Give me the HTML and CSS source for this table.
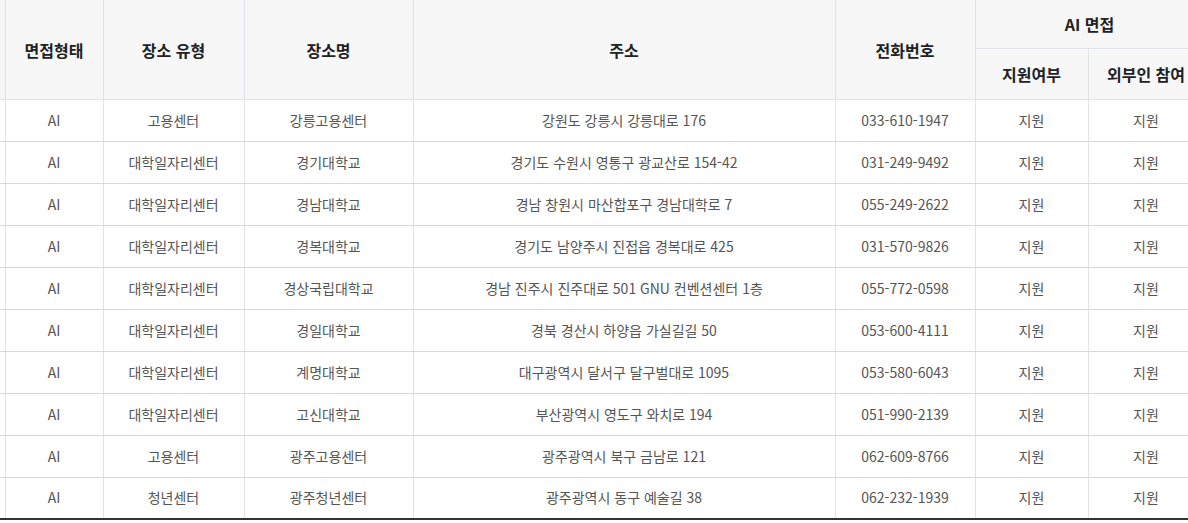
FILE: index.html
```html
<!DOCTYPE html>
<html lang="ko">
<head>
<meta charset="utf-8">
<title>AI 면접 장소</title>
<link rel="stylesheet" href="styles.css">
</head>
<body>
<div class="table-wrap">
  <table class="place-table">
    <colgroup>
      <col class="c-lead">
      <col class="c-type">
      <col class="c-kind">
      <col class="c-name">
      <col class="c-addr">
      <col class="c-tel">
      <col class="c-sup">
      <col class="c-ext">
    </colgroup>
    <thead>
      <tr class="head-top">
        <th rowspan="2" class="lead"></th>
        <th rowspan="2">면접형태</th>
        <th rowspan="2">장소 유형</th>
        <th rowspan="2">장소명</th>
        <th rowspan="2">주소</th>
        <th rowspan="2">전화번호</th>
        <th colspan="2">AI 면접</th>
      </tr>
      <tr class="head-sub">
        <th>지원여부</th>
        <th>외부인 참여</th>
      </tr>
    </thead>
    <tbody>
      <tr><td class="lead"></td><td>AI</td><td>고용센터</td><td>강릉고용센터</td><td>강원도 강릉시 강릉대로 176</td><td>033-610-1947</td><td>지원</td><td>지원</td></tr>
      <tr><td class="lead"></td><td>AI</td><td>대학일자리센터</td><td>경기대학교</td><td>경기도 수원시 영통구 광교산로 154-42</td><td>031-249-9492</td><td>지원</td><td>지원</td></tr>
      <tr><td class="lead"></td><td>AI</td><td>대학일자리센터</td><td>경남대학교</td><td>경남 창원시 마산합포구 경남대학로 7</td><td>055-249-2622</td><td>지원</td><td>지원</td></tr>
      <tr><td class="lead"></td><td>AI</td><td>대학일자리센터</td><td>경복대학교</td><td>경기도 남양주시 진접읍 경복대로 425</td><td>031-570-9826</td><td>지원</td><td>지원</td></tr>
      <tr><td class="lead"></td><td>AI</td><td>대학일자리센터</td><td>경상국립대학교</td><td>경남 진주시 진주대로 501 GNU 컨벤션센터 1층</td><td>055-772-0598</td><td>지원</td><td>지원</td></tr>
      <tr><td class="lead"></td><td>AI</td><td>대학일자리센터</td><td>경일대학교</td><td>경북 경산시 하양읍 가실길길 50</td><td>053-600-4111</td><td>지원</td><td>지원</td></tr>
      <tr><td class="lead"></td><td>AI</td><td>대학일자리센터</td><td>계명대학교</td><td>대구광역시 달서구 달구벌대로 1095</td><td>053-580-6043</td><td>지원</td><td>지원</td></tr>
      <tr><td class="lead"></td><td>AI</td><td>대학일자리센터</td><td>고신대학교</td><td>부산광역시 영도구 와치로 194</td><td>051-990-2139</td><td>지원</td><td>지원</td></tr>
      <tr><td class="lead"></td><td>AI</td><td>고용센터</td><td>광주고용센터</td><td>광주광역시 북구 금남로 121</td><td>062-609-8766</td><td>지원</td><td>지원</td></tr>
      <tr><td class="lead"></td><td>AI</td><td>청년센터</td><td>광주청년센터</td><td>광주광역시 동구 예술길 38</td><td>062-232-1939</td><td>지원</td><td>지원</td></tr>
    </tbody>
  </table>
</div>
</body>
</html>
```

FILE: styles.css
```css
html, body {
  margin: 0;
  padding: 0;
  background: #fff;
}

body {
  font-family: "Noto Sans CJK KR", "Noto Sans", sans-serif;
}

.table-wrap {
  width: 1188px;
  overflow: hidden;
}

.place-table {
  border-collapse: collapse;
  table-layout: fixed;
  width: 1204px;
}

.c-lead { width: 5px; }
.c-type { width: 98px; }
.c-kind { width: 141px; }
.c-name { width: 169px; }
.c-addr { width: 422px; }
.c-tel { width: 140px; }
.c-sup { width: 113px; }
.c-ext { width: 116px; }

.place-table th,
.place-table td {
  text-align: center;
  padding: 0;
  white-space: nowrap;
  border-left: 1px solid #e1e3eb;
  border-right: 1px solid #e1e3eb;
}

.place-table th.lead,
.place-table td.lead {
  border-left: none;
}

.place-table th {
  background: #f7f7f8;
  color: #222;
  font-size: 16px;
  font-weight: 700;
  border-bottom: 1px solid #e1e3eb;
}

.head-top th {
  height: 48px;
}

.head-sub th {
  height: 50px;
}

.place-table td {
  color: #555;
  font-size: 14px;
  height: 39px;
  padding-bottom: 2px;
  border-bottom: 1px solid #d8d8d8;
}

.place-table tbody tr:last-child td {
  height: 38px;
  border-bottom: 2px solid #333;
}
```
